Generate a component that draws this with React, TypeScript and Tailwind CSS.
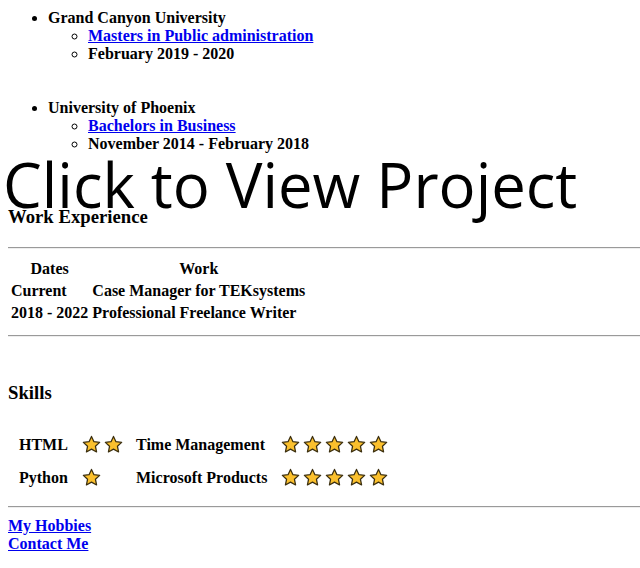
import React from "react";

function Star() {
  return (
    <svg width="19" height="19" viewBox="0 0 24 24" className="shrink-0">
      <path
        d="M12 1.8l3.1 6.6 7.2.9-5.3 5 1.4 7.1L12 17.9l-6.4 3.5 1.4-7.1-5.3-5 7.2-.9z"
        fill="#fbc02d"
        stroke="#3b2f10"
        strokeWidth="1.6"
        strokeLinejoin="round"
      />
    </svg>
  );
}

function Stars({ n }: { n: number }) {
  return (
    <div className="flex gap-[3px]">
      {Array.from({ length: n }).map((_, i) => (
        <Star key={i} />
      ))}
    </div>
  );
}

const skills = [
  { a: "HTML", an: 2, b: "Time Management", bn: 5 },
  { a: "Python", an: 1, b: "Microsoft Products", bn: 5 },
];

export default function App() {
  return (
    <div className="min-h-[568px] bg-white pl-2 pt-[9px] font-['Liberation_Serif',serif] text-[16px] font-bold leading-[18px] text-black">
      <ul className="list-disc pl-10">
        <li>
          Grand Canyon University
          <ul className="list-[circle] pl-10">
            <li>
              <a href="#" className="text-[#0000ee] underline">
                Masters in Public administration
              </a>
            </li>
            <li>February 2019 - 2020</li>
          </ul>
        </li>
      </ul>
      <ul className="mt-[36px] list-disc pl-10">
        <li>
          University of Phoenix
          <ul className="list-[circle] pl-10">
            <li>
              <a href="#" className="text-[#0000ee] underline">
                Bachelors in Business
              </a>
            </li>
            <li>November 2014 - February 2018</li>
          </ul>
        </li>
      </ul>

      <div className="-ml-[5px] h-[54px] whitespace-nowrap font-['Open_Sans',sans-serif] text-[61.6px] font-normal leading-[62px]">
        Click to View Project
      </div>

      <h3 className="-mt-px text-[18.72px] leading-[21px]">Work Experience</h3>
      <hr className="mt-[20px] border-t border-b border-t-[#9a9a9a] border-b-[#eeeeee]" />
      <table className="mt-[8px] border-separate border-spacing-[2px]">
        <thead>
          <tr>
            <th className="p-px text-center">Dates</th>
            <th className="p-px text-center">Work</th>
          </tr>
        </thead>
        <tbody>
          <tr>
            <td className="p-px">Current</td>
            <td className="p-px">Case Manager for TEKsystems</td>
          </tr>
          <tr>
            <td className="p-px">2018 - 2022</td>
            <td className="p-px">Professional Freelance Writer</td>
          </tr>
        </tbody>
      </table>
      <hr className="mt-[10px] border-t border-b border-t-[#9a9a9a] border-b-[#eeeeee]" />

      <h3 className="mt-[45px] text-[18.72px] leading-[21px]">Skills</h3>
      <div className="mt-[25px] flex flex-col">
        {skills.map((s) => (
          <div key={s.a} className="flex h-[33px] items-center">
            <div className="w-[74px] pl-[11px]">{s.a}</div>
            <div className="w-[54px]">
              <Stars n={s.an} />
            </div>
            <div className="w-[145px]">{s.b}</div>
            <Stars n={s.bn} />
          </div>
        ))}
      </div>
      <hr className="mt-[12px] border-t border-b border-t-[#9a9a9a] border-b-[#eeeeee]" />

      <div className="mt-[9px] flex flex-col items-start">
        <a href="#" className="text-[#0000ee] underline">
          My Hobbies
        </a>
        <a href="#" className="text-[#0000ee] underline">
          Contact Me
        </a>
      </div>
    </div>
  );
}
